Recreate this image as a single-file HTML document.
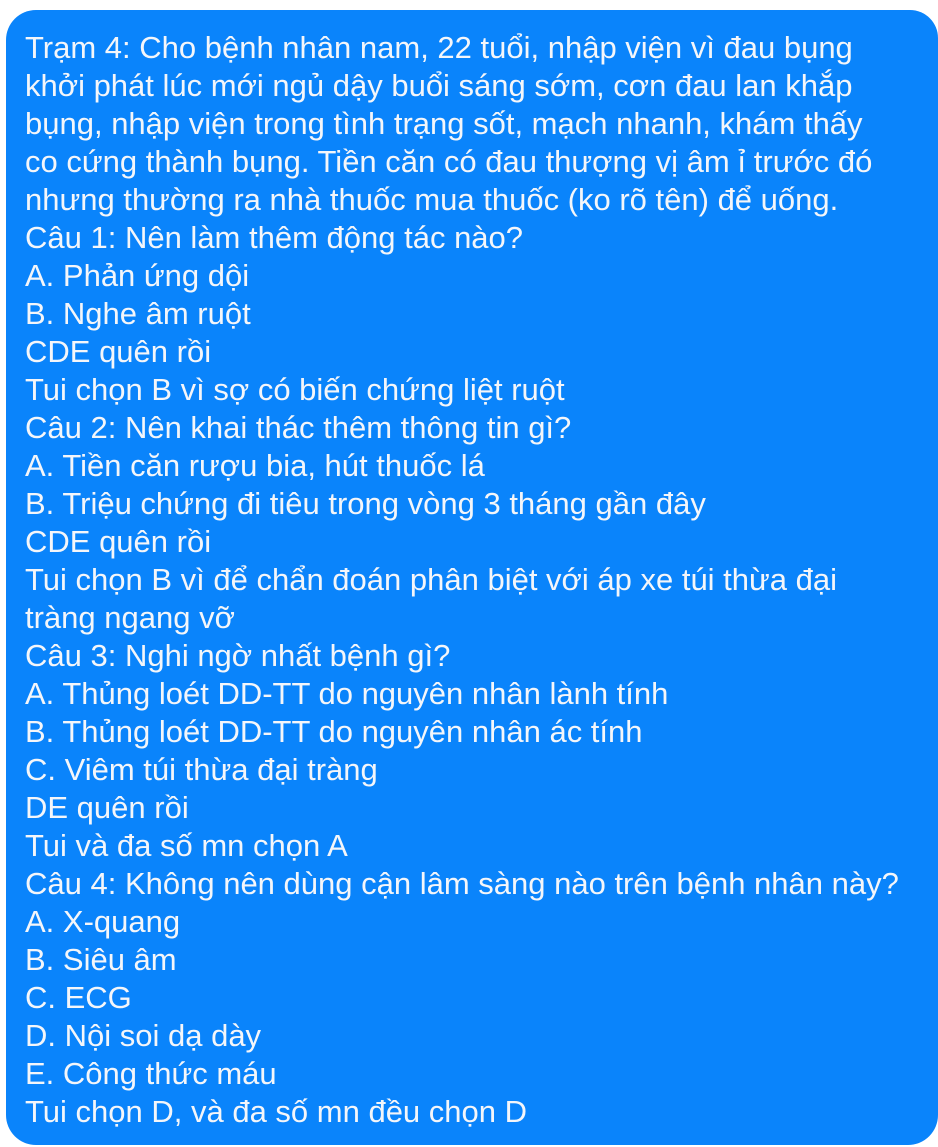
<!DOCTYPE html>
<html><head><meta charset="utf-8"><style>
html,body{margin:0;padding:0;background:#fff;width:938px;height:1147px;overflow:hidden}
.b{position:absolute;left:6px;top:10px;width:932px;height:1135px;background:#0a84fb;border-radius:30px 28px 30px 30px;box-sizing:border-box;padding:19px 0 0 19px;}
.t{font-family:"Liberation Sans",Arial,sans-serif;font-size:31px;line-height:38px;color:#f4f6fa;white-space:nowrap;letter-spacing:0}
</style></head><body>
<div class="b"><div class="t">
Trạm 4: Cho bệnh nhân nam, 22 tuổi, nhập viện vì đau bụng<br>
khởi phát lúc mới ngủ dậy buổi sáng sớm, cơn đau lan khắp<br>
bụng, nhập viện trong tình trạng sốt, mạch nhanh, khám thấy<br>
co cứng thành bụng. Tiền căn có đau thượng vị âm ỉ trước đó<br>
nhưng thường ra nhà thuốc mua thuốc (ko rõ tên) để uống.<br>
Câu 1: Nên làm thêm động tác nào?<br>
A. Phản ứng dội<br>
B. Nghe âm ruột<br>
CDE quên rồi<br>
Tui chọn B vì sợ có biến chứng liệt ruột<br>
Câu 2: Nên khai thác thêm thông tin gì?<br>
A. Tiền căn rượu bia, hút thuốc lá<br>
B. Triệu chứng đi tiêu trong vòng 3 tháng gần đây<br>
CDE quên rồi<br>
Tui chọn B vì để chẩn đoán phân biệt với áp xe túi thừa đại<br>
tràng ngang vỡ<br>
Câu 3: Nghi ngờ nhất bệnh gì?<br>
A. Thủng loét DD-TT do nguyên nhân lành tính<br>
B. Thủng loét DD-TT do nguyên nhân ác tính<br>
C. Viêm túi thừa đại tràng<br>
DE quên rồi<br>
Tui và đa số mn chọn A<br>
Câu 4: Không nên dùng cận lâm sàng nào trên bệnh nhân này?<br>
A. X-quang<br>
B. Siêu âm<br>
C. ECG<br>
D. Nội soi dạ dày<br>
E. Công thức máu<br>
Tui chọn D, và đa số mn đều chọn D
</div></div>
</body></html>
